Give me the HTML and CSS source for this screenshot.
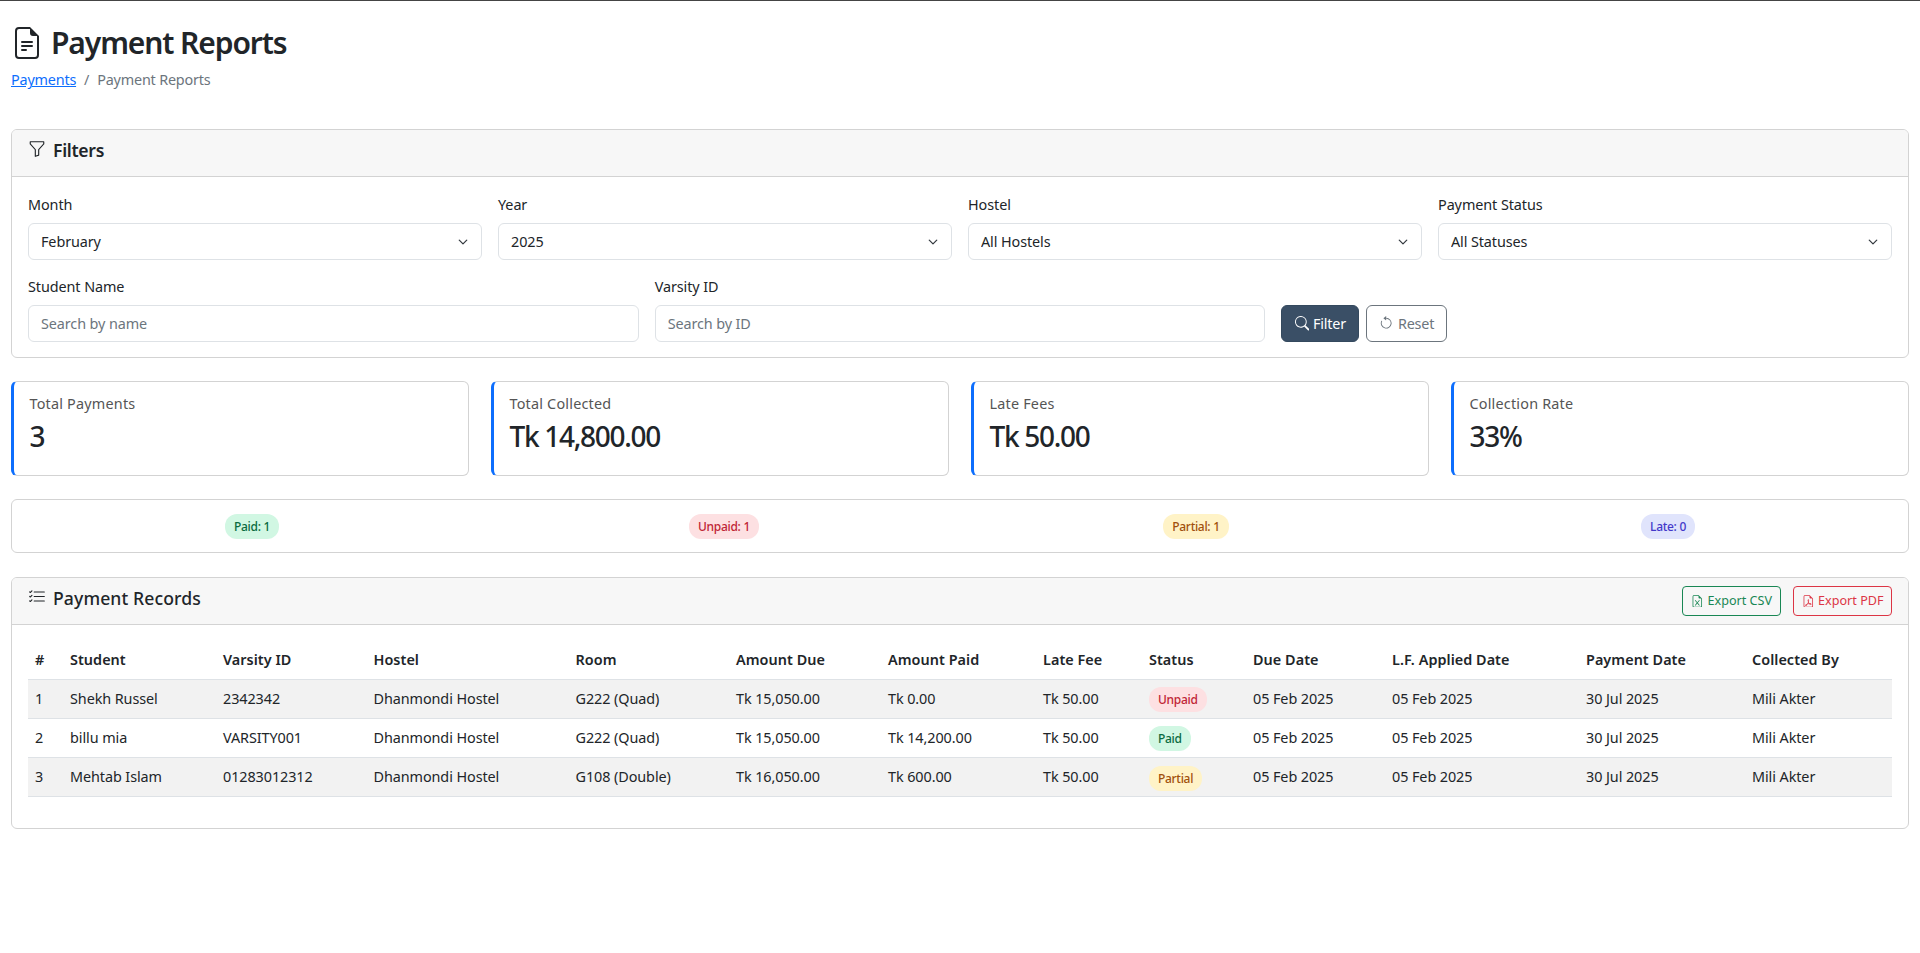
FILE: index.html
```html
<!DOCTYPE html>
<html>
<head>
    <title>Payment Reports</title>
    <link rel="stylesheet" href="styles.css">
</head>
<body>
    <div class="page">
        <h1 class="page-title">
            <svg class="title-icon" viewBox="0 0 16 16"><path d="M5.5 7a.5.5 0 0 0 0 1h5a.5.5 0 0 0 0-1h-5zM5 9.5a.5.5 0 0 1 .5-.5h5a.5.5 0 0 1 0 1h-5a.5.5 0 0 1-.5-.5zm0 2a.5.5 0 0 1 .5-.5h2a.5.5 0 0 1 0 1h-2a.5.5 0 0 1-.5-.5z"/><path d="M9.5 0H4a2 2 0 0 0-2 2v12a2 2 0 0 0 2 2h8a2 2 0 0 0 2-2V4.5L9.5 0zm0 1v2A1.5 1.5 0 0 0 11 4.5h2V14a1 1 0 0 1-1 1H4a1 1 0 0 1-1-1V2a1 1 0 0 1 1-1h5.5z"/></svg>
            Payment Reports
        </h1>
        <nav class="breadcrumb">
            <a href="#">Payments</a>
            <span class="crumb-sep">/</span>
            <span>Payment Reports</span>
        </nav>

        <!-- filtros -->
        <section class="card filter-card">
            <div class="card-header">
                <h5 class="card-title">
                    <svg class="head-icon" viewBox="0 0 16 16"><path d="M1.5 1.5A.5.5 0 0 1 2 1h12a.5.5 0 0 1 .5.5v2a.5.5 0 0 1-.128.334L10 8.692V13.5a.5.5 0 0 1-.342.474l-3 1A.5.5 0 0 1 6 14.5V8.692L1.628 3.834A.5.5 0 0 1 1.5 3.5v-2zm1 .5v1.308l4.372 4.858A.5.5 0 0 1 7 8.5v5.306l2-.666V8.5a.5.5 0 0 1 .128-.334L13.5 3.308V2h-11z"/></svg>
                    Filters
                </h5>
            </div>
            <form class="filters">
                <div class="filter-row-4">
                    <div>
                        <label for="month">Month</label>
                        <select id="month" class="control"><option>February</option></select>
                    </div>
                    <div>
                        <label for="year">Year</label>
                        <select id="year" class="control"><option>2025</option></select>
                    </div>
                    <div>
                        <label for="hostel">Hostel</label>
                        <select id="hostel" class="control"><option>All Hostels</option></select>
                    </div>
                    <div>
                        <label for="status">Payment Status</label>
                        <select id="status" class="control"><option>All Statuses</option></select>
                    </div>
                </div>
                <div class="filter-row-3">
                    <div>
                        <label for="student">Student Name</label>
                        <input id="student" class="control" type="text" placeholder="Search by name">
                    </div>
                    <div>
                        <label for="varsity">Varsity ID</label>
                        <input id="varsity" class="control" type="text" placeholder="Search by ID">
                    </div>
                    <div class="filter-actions">
                        <button type="button" class="btn btn-dark">
                            <svg class="btn-icon" viewBox="0 0 16 16"><path d="M11.742 10.344a6.5 6.5 0 1 0-1.397 1.398h-.001c.03.04.062.078.098.115l3.85 3.85a1 1 0 0 0 1.415-1.414l-3.85-3.85a1.007 1.007 0 0 0-.115-.1zM12 6.5a5.5 5.5 0 1 1-11 0 5.5 5.5 0 0 1 11 0z"/></svg>
                            Filter
                        </button>
                        <button type="button" class="btn btn-grey">
                            <svg class="btn-icon" viewBox="0 0 16 16"><path fill-rule="evenodd" d="M8 3a5 5 0 1 1-4.546 2.914.5.5 0 0 0-.908-.417A6 6 0 1 0 8 2v1z"/><path d="M8 4.466V.534a.25.25 0 0 0-.41-.192L5.23 2.308a.25.25 0 0 0 0 .384l2.36 1.966A.25.25 0 0 0 8 4.466z"/></svg>
                            Reset
                        </button>
                    </div>
                </div>
            </form>
        </section>

        <!-- resumen -->
        <div class="stats">
            <div class="stat">
                <div class="stat-label">Total Payments</div>
                <div class="stat-value">3</div>
            </div>
            <div class="stat">
                <div class="stat-label">Total Collected</div>
                <div class="stat-value">Tk 14,800.00</div>
            </div>
            <div class="stat">
                <div class="stat-label">Late Fees</div>
                <div class="stat-value">Tk 50.00</div>
            </div>
            <div class="stat">
                <div class="stat-label">Collection Rate</div>
                <div class="stat-value">33%</div>
            </div>
        </div>

        <div class="card status-strip">
            <div class="strip-cell"><span class="badge paid">Paid: 1</span></div>
            <div class="strip-cell"><span class="badge unpaid">Unpaid: 1</span></div>
            <div class="strip-cell"><span class="badge partial">Partial: 1</span></div>
            <div class="strip-cell"><span class="badge late">Late: 0</span></div>
        </div>

        <!-- tabla -->
        <section class="card">
            <div class="card-header records-header">
                <h5 class="card-title records-title">
                    <svg class="head-icon" viewBox="0 0 16 16"><path fill-rule="evenodd" d="M5 11.5a.5.5 0 0 1 .5-.5h9a.5.5 0 0 1 0 1h-9a.5.5 0 0 1-.5-.5zm0-4a.5.5 0 0 1 .5-.5h9a.5.5 0 0 1 0 1h-9a.5.5 0 0 1-.5-.5zm0-4a.5.5 0 0 1 .5-.5h9a.5.5 0 0 1 0 1h-9a.5.5 0 0 1-.5-.5zM3.854 2.146a.5.5 0 0 1 0 .708l-1.5 1.5a.5.5 0 0 1-.708 0l-.5-.5a.5.5 0 1 1 .708-.708L2 3.293l1.146-1.147a.5.5 0 0 1 .708 0zm0 4a.5.5 0 0 1 0 .708l-1.5 1.5a.5.5 0 0 1-.708 0l-.5-.5a.5.5 0 1 1 .708-.708L2 7.293l1.146-1.147a.5.5 0 0 1 .708 0zm0 4a.5.5 0 0 1 0 .708l-1.5 1.5a.5.5 0 0 1-.708 0l-.5-.5a.5.5 0 0 1 .708-.708l.146.147 1.146-1.147a.5.5 0 0 1 .708 0z"/></svg>
                    Payment Records
                </h5>
                <div class="export-btns">
                    <button type="button" class="btn-sm btn-green">
                        <svg class="btn-icon-sm" viewBox="0 0 16 16"><path d="M5.884 6.68a.5.5 0 1 0-.768.64L7.349 10l-2.233 2.68a.5.5 0 0 0 .768.64L8 10.781l2.116 2.54a.5.5 0 0 0 .768-.641L8.651 10l2.233-2.68a.5.5 0 0 0-.768-.64L8 9.219l-2.116-2.54z"/><path d="M14 14V4.5L9.5 0H4a2 2 0 0 0-2 2v12a2 2 0 0 0 2 2h8a2 2 0 0 0 2-2zM9.5 3A1.5 1.5 0 0 0 11 4.5h2V14a1 1 0 0 1-1 1H4a1 1 0 0 1-1-1V2a1 1 0 0 1 1-1h5.5v2z"/></svg>
                        Export CSV
                    </button>
                    <button type="button" class="btn-sm btn-red">
                        <svg class="btn-icon-sm" viewBox="0 0 16 16"><path d="M14 14V4.5L9.5 0H4a2 2 0 0 0-2 2v12a2 2 0 0 0 2 2h8a2 2 0 0 0 2-2zM9.5 3A1.5 1.5 0 0 0 11 4.5h2V14a1 1 0 0 1-1 1H4a1 1 0 0 1-1-1V2a1 1 0 0 1 1-1h5.5v2z"/><path d="M4.603 14.087a.81.81 0 0 1-.438-.42c-.195-.388-.13-.776.08-1.102.198-.307.526-.568.897-.787a7.68 7.68 0 0 1 1.482-.645 19.697 19.697 0 0 0 1.062-2.227 7.269 7.269 0 0 1-.43-1.295c-.086-.4-.119-.796-.046-1.136.075-.354.274-.672.65-.823.192-.077.4-.12.602-.077a.7.7 0 0 1 .477.365c.088.164.12.356.127.538.007.188-.012.396-.047.614-.084.51-.27 1.134-.52 1.794a10.954 10.954 0 0 0 .98 1.686 5.753 5.753 0 0 1 1.334.05c.364.066.734.195.96.465.12.144.193.32.2.518.007.192-.047.382-.138.563a1.04 1.04 0 0 1-.354.416.856.856 0 0 1-.51.138c-.331-.014-.654-.196-.933-.417a5.712 5.712 0 0 1-.911-.95 11.651 11.651 0 0 0-1.997.406 11.307 11.307 0 0 1-1.02 1.51c-.292.35-.609.656-.927.787a.793.793 0 0 1-.58.029zm1.379-1.901c-.166.076-.32.156-.459.238-.328.194-.541.383-.647.547-.094.145-.096.25-.04.361.01.022.02.036.026.044a.266.266 0 0 0 .035-.012c.137-.056.355-.235.635-.572a8.18 8.18 0 0 0 .45-.606zm1.64-1.33a12.71 12.71 0 0 1 1.01-.193 11.744 11.744 0 0 1-.51-.858 20.801 20.801 0 0 1-.5 1.05zm2.446.45c.15.163.296.3.435.41.24.19.407.253.498.256a.107.107 0 0 0 .07-.015.307.307 0 0 0 .094-.125.436.436 0 0 0 .059-.2.095.095 0 0 0-.026-.063c-.052-.062-.2-.152-.518-.209a3.876 3.876 0 0 0-.612-.053zM8.078 7.8a6.7 6.7 0 0 0 .2-.828c.031-.188.043-.343.038-.465a.613.613 0 0 0-.032-.198.517.517 0 0 0-.145.04c-.087.035-.158.106-.196.283-.04.192-.03.469.046.822.024.111.054.227.09.346z"/></svg>
                        Export PDF
                    </button>
                </div>
            </div>
            <div class="records-body">
                <table class="records">
                    <thead>
                        <tr>
                            <th>#</th>
                            <th>Student</th>
                            <th>Varsity ID</th>
                            <th>Hostel</th>
                            <th>Room</th>
                            <th>Amount Due</th>
                            <th>Amount Paid</th>
                            <th>Late Fee</th>
                            <th>Status</th>
                            <th>Due Date</th>
                            <th>L.F. Applied Date</th>
                            <th>Payment Date</th>
                            <th>Collected By</th>
                        </tr>
                    </thead>
                    <tbody>
                        <tr>
                            <td>1</td>
                            <td>Shekh Russel</td>
                            <td>2342342</td>
                            <td>Dhanmondi Hostel</td>
                            <td>G222 (Quad)</td>
                            <td>Tk 15,050.00</td>
                            <td>Tk 0.00</td>
                            <td>Tk 50.00</td>
                            <td><span class="badge unpaid">Unpaid</span></td>
                            <td>05 Feb 2025</td>
                            <td>05 Feb 2025</td>
                            <td>30 Jul 2025</td>
                            <td>Mili Akter</td>
                        </tr>
                        <tr>
                            <td>2</td>
                            <td>billu mia</td>
                            <td>VARSITY001</td>
                            <td>Dhanmondi Hostel</td>
                            <td>G222 (Quad)</td>
                            <td>Tk 15,050.00</td>
                            <td>Tk 14,200.00</td>
                            <td>Tk 50.00</td>
                            <td><span class="badge paid">Paid</span></td>
                            <td>05 Feb 2025</td>
                            <td>05 Feb 2025</td>
                            <td>30 Jul 2025</td>
                            <td>Mili Akter</td>
                        </tr>
                        <tr>
                            <td>3</td>
                            <td>Mehtab Islam</td>
                            <td>01283012312</td>
                            <td>Dhanmondi Hostel</td>
                            <td>G108 (Double)</td>
                            <td>Tk 16,050.00</td>
                            <td>Tk 600.00</td>
                            <td>Tk 50.00</td>
                            <td><span class="badge partial">Partial</span></td>
                            <td>05 Feb 2025</td>
                            <td>05 Feb 2025</td>
                            <td>30 Jul 2025</td>
                            <td>Mili Akter</td>
                        </tr>
                    </tbody>
                </table>
            </div>
        </section>
    </div>
</body>
</html>
```

FILE: styles.css
```css
* {
    box-sizing: border-box;
}

body {
    margin: 0;
    border-top: 1px solid #444;
    font-family: "Noto Sans", "Open Sans", sans-serif;
    font-size: 14.4px;
    line-height: 1.5;
    letter-spacing: -0.08px;
    color: #212529;
    background-color: #fff;
}

.page {
    padding: 0 11px;
}

.page-title {
    display: flex;
    align-items: center;
    gap: 8px;
    margin: 23px 0 7px;
    font-size: 30px;
    font-weight: 600;
    line-height: 38.4px;
    letter-spacing: -1.1px;
}

.title-icon {
    width: 32px;
    height: 32px;
    fill: currentColor;
}

.breadcrumb {
    display: flex;
    gap: 8px;
    margin-bottom: 38px;
    letter-spacing: -0.2px;
    color: #6c757d;
}

.breadcrumb a {
    color: #0d6efd;
}

.card {
    margin-bottom: 24px;
    border: 1px solid #d3d3d3;
    border-radius: 6px;
    background-color: #fff;
}

.filter-card {
    margin-bottom: 23px;
}

.card-header {
    display: flex;
    align-items: center;
    height: 47px;
    padding: 0 16px;
    border-bottom: 1px solid #d3d3d3;
    border-radius: 5px 5px 0 0;
    background-color: #f7f7f7;
}

.card-title {
    display: flex;
    align-items: center;
    gap: 7px;
    margin: 0;
    padding-bottom: 5px;
    font-size: 17.6px;
    font-weight: 600;
    letter-spacing: -0.3px;
}

.records-title {
    font-weight: 500;
    letter-spacing: 0.1px;
}

.head-icon {
    width: 18px;
    height: 18px;
    margin-top: -3px;
    fill: currentColor;
}

/* formulario de filtros */
.filters {
    padding: 16px 16px 15px;
}

.filter-row-4 {
    display: grid;
    grid-template-columns: repeat(4, 1fr);
    gap: 16px;
    margin-bottom: 15px;
}

.filter-row-3 {
    display: grid;
    grid-template-columns: 2fr 2fr 2fr;
    gap: 16px;
}

label {
    display: block;
    height: 22px;
    padding-top: 1px;
    margin-bottom: 8px;
}

.control {
    display: block;
    width: 100%;
    height: 37px;
    padding: 0 12px;
    border: 1px solid #dee2e6;
    border-radius: 6px;
    font: inherit;
    letter-spacing: -0.1px;
    color: #212529;
    background-color: #fff;
}

.control::placeholder {
    color: #6c757d;
    opacity: 1;
}

select.control {
    padding-top: 1px;
    appearance: none;
    background-image: url("data:image/svg+xml,%3csvg xmlns='http://www.w3.org/2000/svg' viewBox='0 0 16 16'%3e%3cpath fill='none' stroke='%23343a40' stroke-linecap='round' stroke-linejoin='round' stroke-width='2' d='m2 5 6 6 6-6'/%3e%3c/svg%3e");
    background-repeat: no-repeat;
    background-position: right 12px center;
    background-size: 12px 10px;
}

.filter-actions {
    display: flex;
    align-items: flex-end;
    gap: 7px;
}

.btn {
    display: inline-flex;
    align-items: center;
    justify-content: center;
    gap: 4px;
    height: 37px;
    padding: 0 12px;
    border: 1px solid;
    border-radius: 6px;
    font: inherit;
    letter-spacing: -0.2px;
    cursor: pointer;
}

.btn-icon {
    width: 14.4px;
    height: 14.4px;
    fill: currentColor;
}

.btn-dark {
    width: 78px;
    border-color: #34495e;
    color: #fff;
    background-color: #3a4f66;
}

.btn-grey {
    width: 81px;
    border-color: #6c757d;
    color: #6c757d;
    background-color: #fff;
}

/* tarjetas de resumen */
.stats {
    display: grid;
    grid-template-columns: repeat(4, 1fr);
    gap: 22px;
    margin-bottom: 23px;
}

.stat {
    height: 95px;
    padding: 11px 16px 0 15.5px;
    border: 1px solid #d3d3d3;
    border-left: 3px solid #0d6efd;
    border-radius: 6px;
}

.stat-label {
    margin-bottom: 2px;
    letter-spacing: 0.2px;
    color: #555;
}

.stat-value {
    font-size: 28px;
    font-weight: 500;
    line-height: 1.4;
    letter-spacing: -1.3px;
}

/* franja de estados */
.status-strip {
    display: grid;
    grid-template-columns: repeat(4, 1fr);
    align-items: center;
    height: 54px;
    padding: 0 4px;
}

.strip-cell {
    text-align: center;
}

.badge {
    display: inline-block;
    height: 25px;
    padding: 0 9px;
    border-radius: 12px;
    font-size: 12px;
    font-weight: 500;
    line-height: 26px;
    letter-spacing: -0.3px;
    white-space: nowrap;
}

.paid {
    color: #0a6b41;
    background-color: #d1f7e3;
}

.unpaid {
    color: #c02535;
    background-color: #fde0e2;
}

.partial {
    color: #a1500c;
    background-color: #fff3c7;
}

.late {
    color: #4338ca;
    background-color: #e0e4fc;
}

/* tabla de pagos */
.records-header {
    justify-content: space-between;
}

.export-btns {
    display: flex;
    gap: 12px;
}

.btn-sm {
    display: inline-flex;
    align-items: center;
    justify-content: center;
    gap: 4px;
    height: 30px;
    padding: 0;
    border: 1px solid;
    border-radius: 4px;
    font: inherit;
    font-size: 12.6px;
    letter-spacing: 0;
    background-color: transparent;
    cursor: pointer;
}

.btn-icon-sm {
    width: 12.6px;
    height: 12.6px;
    fill: currentColor;
}

.btn-green {
    width: 99px;
    color: #198754;
}

.btn-red {
    width: 99px;
    color: #dc3545;
}

.records-body {
    padding: 16px 16px 31px;
}

.records {
    width: 100%;
    border-collapse: collapse;
    table-layout: fixed;
}

.records th,
.records td {
    padding: 0 7px;
    border-bottom: 1px solid #dee2e6;
    text-align: left;
    white-space: nowrap;
}

.records th {
    height: 38px;
    font-weight: 600;
    letter-spacing: 0.05px;
}

.records td {
    height: 39.3px;
}

.records tbody tr:nth-child(odd) td {
    background-color: #f2f2f2;
}

.records .badge {
    vertical-align: middle;
    margin-top: 2px;
}

.records th:nth-child(1) { width: 35px; }
.records th:nth-child(2) { width: 153px; }
.records th:nth-child(3) { width: 150.5px; }
.records th:nth-child(4) { width: 202px; }
.records th:nth-child(5) { width: 160.5px; }
.records th:nth-child(6) { width: 152px; }
.records th:nth-child(7) { width: 155px; }
.records th:nth-child(8) { width: 106px; }
.records th:nth-child(9) { width: 104px; }
.records th:nth-child(10) { width: 139px; }
.records th:nth-child(11) { width: 194px; }
.records th:nth-child(12) { width: 166px; }
.records th:nth-child(13) { width: 147px; }
```
